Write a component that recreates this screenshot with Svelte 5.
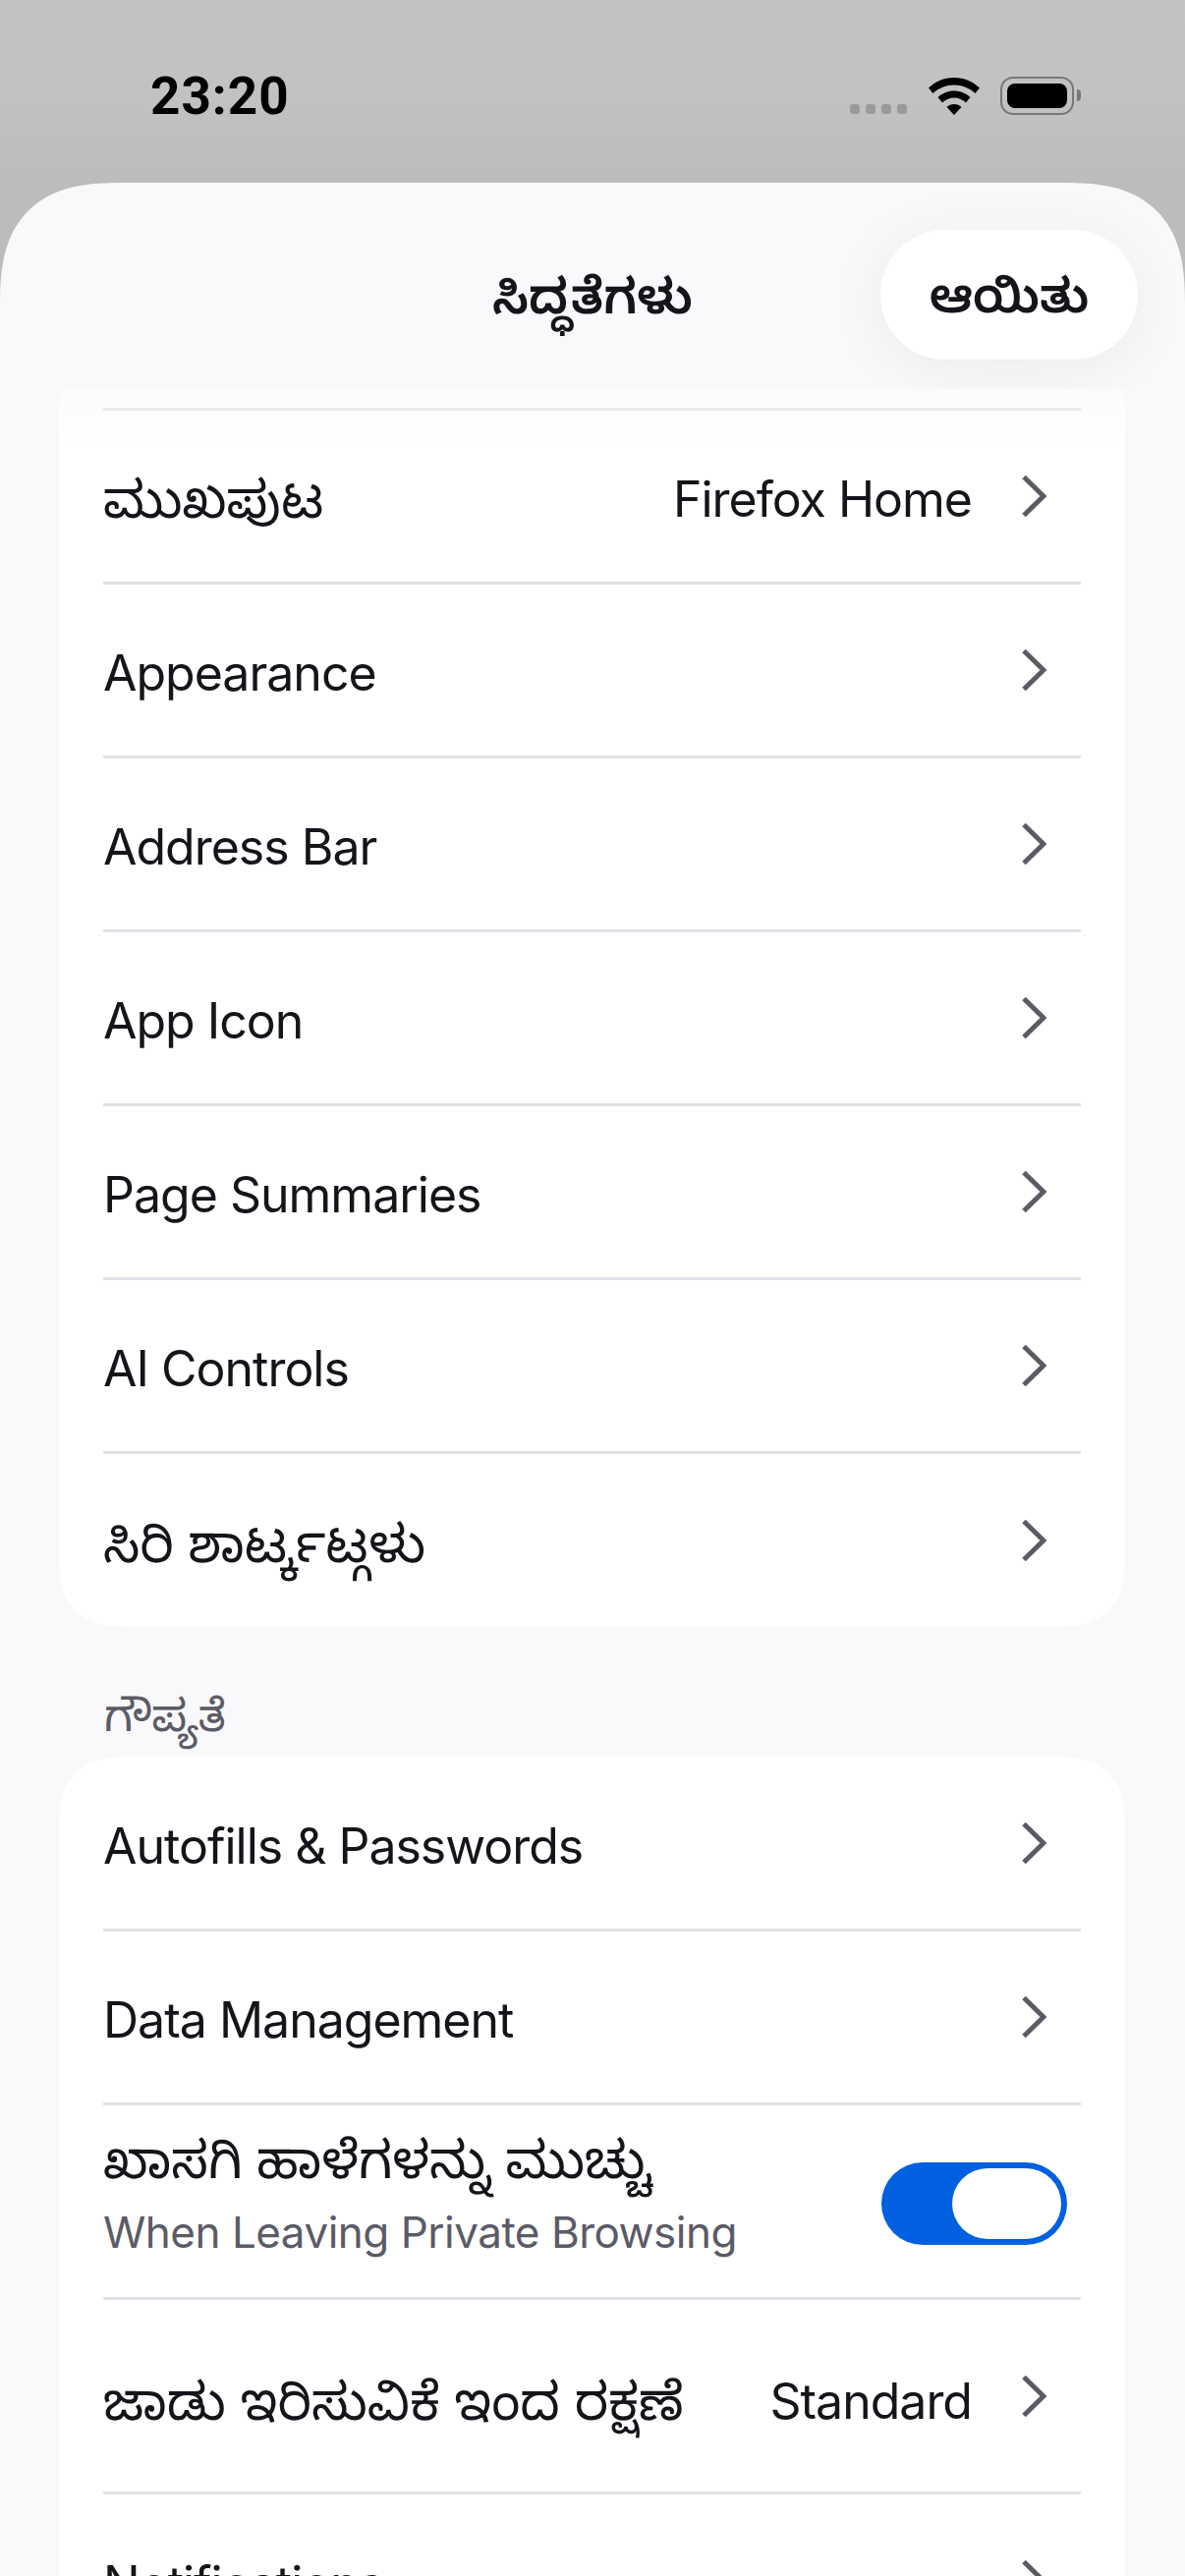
<script>
  const general = [
    { label: 'ಮುಖಪುಟ', value: 'Firefox Home' },
    { label: 'Appearance' },
    { label: 'Address Bar' },
    { label: 'App Icon' },
    { label: 'Page Summaries' },
    { label: 'AI Controls' },
    { label: 'ಸಿರಿ ಶಾರ್ಟ್ಕಟ್ಗಳು' }
  ];

  // ಕನ್ನಡ labels come out narrower than the reference at the latin size
  const isKannada = (text) => /[\u0C80-\u0CFF]/.test(text);
</script>

{#snippet chevron()}
  <svg class="chevron" width="26" height="44" viewBox="0 0 26 44" aria-hidden="true">
    <path d="M3 2.5 L23 22 L3 41.5" fill="none" stroke="#5b5b66" stroke-width="5" />
  </svg>
{/snippet}

{#snippet navRow(item)}
  <div class="row">
    <span class="label" class:kn={isKannada(item.label)}>{item.label}</span>
    {#if item.value}<span class="value">{item.value}</span>{/if}
    {@render chevron()}
  </div>
{/snippet}

<div class="page">
  <div class="status">
    <span class="time">23:20</span>
    <div class="status-icons">
      <div class="signal"><i></i><i></i><i></i><i></i></div>
      <svg class="wifi" width="52" height="38" viewBox="0 0 52 38" aria-hidden="true">
        <path d="M26 0 C36 0 45 4 52 10.500 L47.500 16 C41.500 10.500 34 7.500 26 7.500 C18 7.500 10.500 10.500 4.500 16 L0 10.500 C7 4 16 0 26 0 Z" />
        <path d="M26 13.500 C32.500 13.500 38 16 42.500 20 L38 25.500 C35 22.500 30.500 20.500 26 20.500 C21.500 20.500 17 22.500 14 25.500 L9.500 20 C14 16 19.500 13.500 26 13.500 Z" />
        <path d="M26 27 C29 27 31.500 28 33.500 30 L26 38 L18.500 30 C20.500 28 23 27 26 27 Z" />
      </svg>
      <div class="battery"><div class="battery-fill"></div></div>
      <div class="battery-tip"></div>
    </div>
  </div>

  <div class="sheet">
    <header class="nav">
      <h1>ಸಿದ್ಧತೆಗಳು</h1>
      <button class="done">ಆಯಿತು</button>
    </header>
    <div class="scroll">
      <div class="fade"></div>
      <section class="card first">
        {#each general as item}
          {@render navRow(item)}
        {/each}
      </section>

      <h2>ಗೌಪ್ಯತೆ</h2>
      <section class="card second">
        {@render navRow({ label: 'Autofills & Passwords' })}
        {@render navRow({ label: 'Data Management' })}
        <div class="row tall">
          <div class="stack">
            <span class="label kn">ಖಾಸಗಿ ಹಾಳೆಗಳನ್ನು ಮುಚ್ಚು</span>
            <span class="sub">When Leaving Private Browsing</span>
          </div>
          <div class="toggle"><div class="knob"></div></div>
        </div>
        <div class="row tall">
          <span class="label kn">ಜಾಡು ಇರಿಸುವಿಕೆ ಇಂದ ರಕ್ಷಣೆ</span>
          <span class="value">Standard</span>
          {@render chevron()}
        </div>
        {@render navRow({ label: 'Notifications' })}
      </section>
    </div>
  </div>
</div>

<style>
  :global(body) {
    margin: 0;
    background: #f9f9fb;
  }
  .page {
    display: flex;
    flex-direction: column;
    width: 1206px;
    height: 2622px;
    overflow: hidden;
    background: linear-gradient(#c3c3c5, #c2c2c4 90px, #bcbcbe 186px);
    color: #15141a;
    font-family: Inter, "Noto Sans", "Noto Sans Kannada", sans-serif;
  }
  .status {
    display: flex;
    justify-content: space-between;
    align-items: flex-start;
    height: 186px;
    padding: 0 106px 0 153px;
    box-sizing: border-box;
    flex: none;
  }
  .time {
    margin-top: 70px;
    font-family: Roboto, sans-serif;
    font-size: 53px;
    line-height: 56px;
    font-weight: 700;
    letter-spacing: 1px;
    color: #000;
  }
  .status-icons {
    display: flex;
    align-items: flex-start;
    margin-top: 78px;
  }
  .signal {
    display: flex;
    gap: 6px;
    margin: 28px 22px 0 0;
  }
  .signal i {
    width: 10px;
    height: 10px;
    border-radius: 3px;
    background: #9a9a9c;
  }
  .wifi {
    margin: 1px 21px 0 0;
  }
  .battery {
    width: 75px;
    height: 39px;
    padding: 5px;
    box-sizing: border-box;
    border: 2.500px solid #77777a;
    border-radius: 13px;
  }
  .battery-fill {
    width: 100%;
    height: 100%;
    border-radius: 8px;
    background: #000;
  }
  .battery-tip {
    width: 4px;
    height: 12px;
    margin: 13px 0 0 3px;
    border-radius: 0 4px 4px 0;
    background: #77777a;
  }
  .sheet {
    display: flex;
    flex-direction: column;
    flex: 1;
    min-height: 0;
    background: #f9f9fb;
    border-radius: 124px 124px 0 0;
    corner-shape: superellipse(1.4);
  }
  .nav {
    position: relative;
    display: flex;
    align-items: center;
    justify-content: flex-end;
    flex: none;
    height: 210px;
    padding-right: 48px;
    box-sizing: border-box;
  }
  h1 {
    position: absolute;
    left: 0;
    right: 0;
    top: 80px;
    margin: 0;
    text-align: center;
    font-size: 50px;
    line-height: 70px;
    font-weight: 600;
  }
  .done {
    width: 262px;
    height: 132px;
    margin-top: 18px;
    padding: 0;
    border: 0;
    border-radius: 66px;
    background: #fff;
    color: #15141a;
    font: 600 49px/1 Inter, "Noto Sans", "Noto Sans Kannada", sans-serif;
    box-shadow: 0 8px 60px rgba(0, 0, 0, 0.06);
  }
  .scroll {
    position: relative;
    flex: 1;
    min-height: 0;
    padding: 0 61px 0 60px;
  }
  .fade {
    position: absolute;
    z-index: 1;
    left: 0;
    right: 0;
    top: 0;
    height: 60px;
    background: linear-gradient(rgba(249, 249, 251, 0.6), rgba(249, 249, 251, 0));
  }
  .card {
    padding: 0 45px;
    border-radius: 72px;
    corner-shape: superellipse(1.4);
    background: #fff;
  }
  .card.first {
    padding-top: 19px;
    border-radius: 0 0 72px 72px;
  }
  .card.first .row:first-child {
    height: 180px;
    border-top: 3px solid #e0e0e6;
  }
  .card.second {
    padding-top: 1px;
  }
  .row {
    display: flex;
    align-items: center;
    height: 177px;
    box-sizing: border-box;
    border-bottom: 3px solid #e0e0e6;
    font-size: 50px;
    letter-spacing: -1px;
  }
  .row:last-child {
    height: 176px;
    border-bottom: 0;
  }
  .row.tall {
    height: 198px;
  }
  .label {
    flex: 1;
    margin-top: 6px;
    white-space: nowrap;
    line-height: 64px;
  }
  .label.kn {
    font-size: 53px;
    letter-spacing: 0;
  }
  .value {
    margin: 6px 50px 0 0;
    white-space: nowrap;
  }
  .row.tall .label,
  .row.tall .value {
    margin-top: 11px;
  }
  .chevron {
    flex: none;
    margin-right: 35px;
  }
  .stack {
    display: flex;
    flex-direction: column;
    flex: 1;
    margin-top: -20px;
  }
  .row.tall .stack .label {
    flex: none;
    margin: 0 0 10px;
    line-height: 72px;
  }
  .sub {
    font-size: 44px;
    line-height: 56px;
    color: #5b5b66;
    letter-spacing: -0.5px;
  }
  .toggle {
    display: flex;
    justify-content: flex-end;
    align-items: center;
    width: 189px;
    height: 84px;
    margin: 4px 14px 0 0;
    padding-right: 6px;
    box-sizing: border-box;
    border-radius: 42px;
    background: #0060df;
  }
  .knob {
    width: 111px;
    height: 72px;
    border-radius: 36px;
    background: #fff;
  }
  h2 {
    margin: 0;
    height: 132px;
    padding: 60px 0 0 46px;
    box-sizing: border-box;
    font-size: 45px;
    line-height: 60px;
    font-weight: 400;
    color: #5b5b66;
  }
</style>
